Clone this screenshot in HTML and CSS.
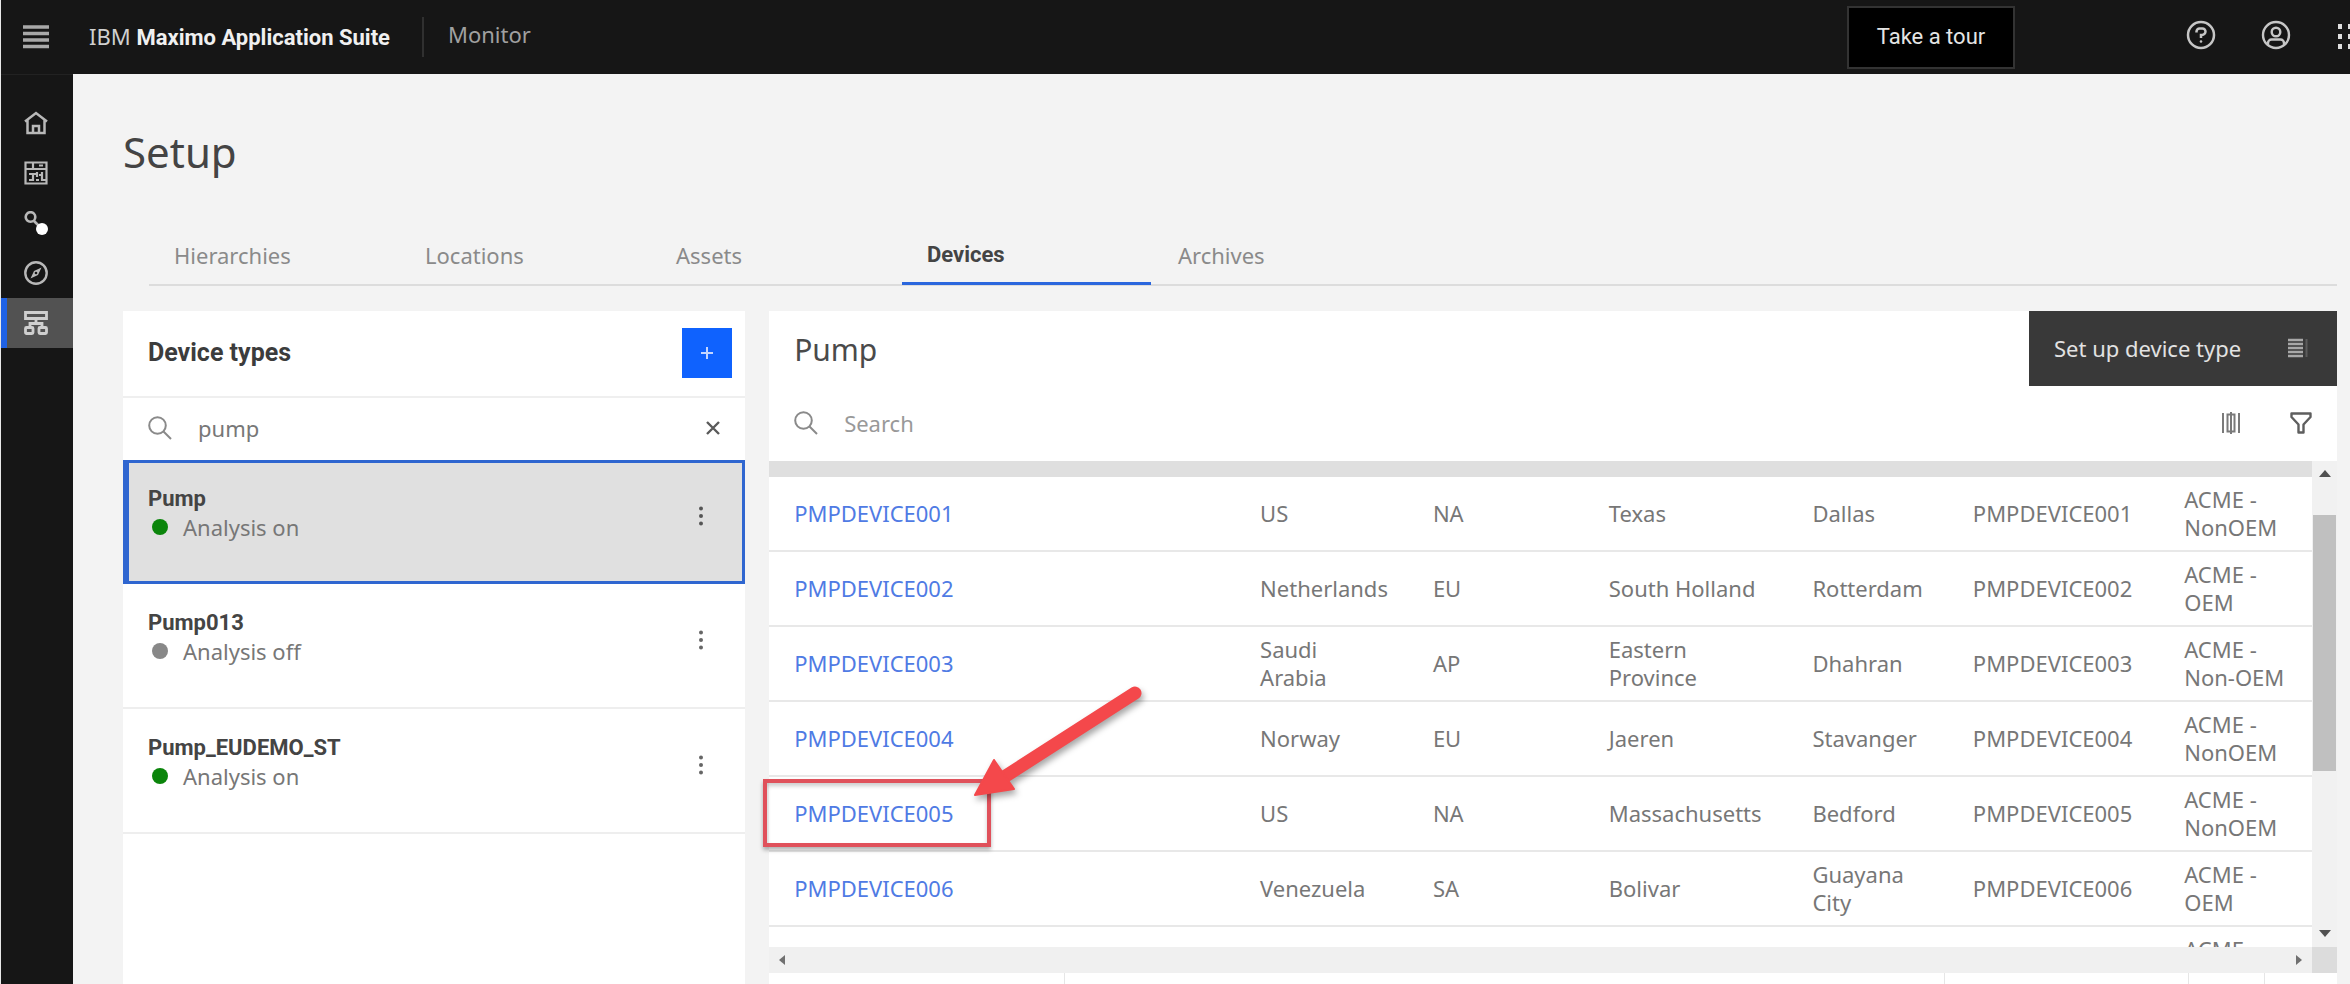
FILE: index.html
```
<!DOCTYPE html>
<html lang="en">
<head>
<meta charset="utf-8">
<title>Setup - Monitor</title>
<link rel="stylesheet" href="styles.css">
</head>
<body>
<header class="topbar">
  <button class="icon-btn menu-btn" aria-label="Menu">
    <svg width="26" height="26" viewBox="0 0 26 26" stroke="#a8a8a8" stroke-width="3.500"><path d="M0 3h26M0 9.500h26M0 16h26M0 22.500h26"/></svg>
  </button>
  <a class="brand" href="#">IBM <strong>Maximo Application Suite</strong></a>
  <span class="app-name">Monitor</span>
  <button class="tour">Take a tour</button>
  <div class="top-actions">
    <button class="icon-btn" aria-label="Help">
      <svg width="30" height="30" viewBox="0 0 30 30" fill="none" stroke="#c6c6c6" stroke-width="2.500"><circle cx="15" cy="15" r="13"/><path d="M10.500 12.500v-1a3 3 0 0 1 3-3h3a3 3 0 0 1 3 3 3.500 3.500 0 0 1-3.500 3.500h-1v3"/><circle cx="15" cy="21.500" r="1.300" fill="#c6c6c6" stroke="none"/></svg>
    </button>
    <button class="icon-btn" aria-label="User">
      <svg width="30" height="30" viewBox="0 0 30 30" fill="none" stroke="#c6c6c6" stroke-width="2.400"><circle cx="15" cy="15" r="13"/><circle cx="15" cy="12" r="4.300"/><path d="M7 25v-2a3.500 3.500 0 0 1 3.500-3.500h9a3.500 3.500 0 0 1 3.500 3.500v2"/></svg>
    </button>
    <button class="icon-btn apps" aria-label="Apps">
      <svg width="26" height="26" viewBox="0 0 26 26" fill="#dedede"><path d="M0 0h4v5H0zM10 0h4v5h-4zM20 0h4v5h-4zM0 10h4v5H0zM10 10h4v5h-4zM20 10h4v5h-4zM0 20h4v5H0zM10 20h4v5h-4zM20 20h4v5h-4z"/></svg>
    </button>
  </div>
</header>
<div class="shell">
  <nav class="rail" aria-label="Main">
    <a href="#" aria-label="Home"><svg width="24" height="24" viewBox="0 0 24 24" fill="none" stroke="#b8b8b8" stroke-width="2.500"><path d="M1 10.500 12 2l11 8.500M3.500 9v13h17V9M9 22v-7h6v7"/></svg></a>
    <a href="#" aria-label="Dashboards"><svg width="24" height="24" viewBox="0 0 24 24" fill="none" stroke="#b8b8b8" stroke-width="2.200"><path d="M1.500 1.500h21v21h-21zM1.500 8h21M9 1.500V8M15 4.500h4M5 13h4v6H5M13 11v5M12 19h3M18 11v8h4M9 13h3M15 14h3"/></svg></a>
    <a href="#" aria-label="Connect"><svg width="24" height="24" viewBox="0 0 24 24" fill="none" stroke="#b8b8b8" stroke-width="2.600"><circle cx="6.500" cy="6" r="4.800"/><path d="m10 10 5 5"/><circle cx="18" cy="18" r="6" fill="#fff" stroke="none"/></svg></a>
    <a href="#" aria-label="Explore"><svg width="24" height="24" viewBox="0 0 24 24" fill="none" stroke="#b8b8b8" stroke-width="2.400"><circle cx="12" cy="12" r="10.700"/><path d="m17.500 6.500-7.500 3.500-3.500 7.500 7.500-3.500z" fill="#b8b8b8" stroke="none"/><circle cx="12" cy="12" r="1.300" fill="#161616" stroke="none"/></svg></a>
    <a href="#" class="active" aria-current="page" aria-label="Setup"><svg width="24" height="24" viewBox="0 0 24 24" fill="none" stroke="#cfcfcf" stroke-width="2.800"><path d="M1.500 1.500h21v6h-21zM12 7.500v5M6 16.500v-4h12v4"/><rect x="1.500" y="16.500" width="7.500" height="6" rx="1"/><rect x="15" y="16.500" width="7.500" height="6" rx="1"/></svg></a>
  </nav>
  <main class="main">
    <h1>Setup</h1>
    <div class="tabs" role="tablist">
      <button role="tab">Hierarchies</button>
      <button role="tab">Locations</button>
      <button role="tab">Assets</button>
      <button role="tab" aria-selected="true" class="selected">Devices</button>
      <button role="tab">Archives</button>
    </div>
    <div class="panels">
      <section class="types">
        <div class="types-head">
          <h2>Device types</h2>
          <button class="add" aria-label="Add device type"><svg width="12" height="12" viewBox="0 0 12 12" stroke="#c4d6ff" stroke-width="2"><path d="M6 0v12M0 6h12"/></svg></button>
        </div>
        <div class="search types-search">
          <svg width="24" height="24" viewBox="0 0 24 24" fill="none" stroke="#8a8a8a" stroke-width="2"><circle cx="9.500" cy="9.500" r="8.300"/><path d="m15.500 15.500 7.500 7.500"/></svg>
          <input type="text" value="pump" aria-label="Search device types">
          <button class="icon-btn" aria-label="Clear"><svg width="14" height="14" viewBox="0 0 14 14" stroke="#5a5a5a" stroke-width="2.400"><path d="m1 1 12 12M13 1 1 13"/></svg></button>
        </div>
        <ul class="type-list">
          <li class="current"><div><strong>Pump</strong><span class="status on">Analysis on</span></div><button class="icon-btn" aria-label="Pump options"><svg width="6" height="20" viewBox="0 0 6 20" fill="#555"><circle cx="3" cy="2.500" r="2"/><circle cx="3" cy="10" r="2"/><circle cx="3" cy="17.500" r="2"/></svg></button></li>
          <li><div><strong>Pump013</strong><span class="status">Analysis off</span></div><button class="icon-btn" aria-label="Pump013 options"><svg width="6" height="20" viewBox="0 0 6 20" fill="#666"><circle cx="3" cy="2.500" r="2"/><circle cx="3" cy="10" r="2"/><circle cx="3" cy="17.500" r="2"/></svg></button></li>
          <li><div><strong>Pump_EUDEMO_ST</strong><span class="status on">Analysis on</span></div><button class="icon-btn" aria-label="Pump_EUDEMO_ST options"><svg width="6" height="20" viewBox="0 0 6 20" fill="#666"><circle cx="3" cy="2.500" r="2"/><circle cx="3" cy="10" r="2"/><circle cx="3" cy="17.500" r="2"/></svg></button></li>
        </ul>
      </section>
      <section class="devices">
        <div class="devices-head">
          <h2>Pump</h2>
          <button class="setup-btn">Set up device type
            <svg width="20" height="20" viewBox="0 0 20 20" stroke="#a8a8a8" stroke-width="2.400"><path d="M0 2h15M0 6h15M0 10h15M0 14h15M0 18h15"/><path d="M18.500 1v18" stroke="#5c5c5c" stroke-width="2"/></svg>
          </button>
        </div>
        <div class="search devices-search">
          <svg width="24" height="24" viewBox="0 0 24 24" fill="none" stroke="#8a8a8a" stroke-width="2"><circle cx="9.500" cy="9.500" r="8.300"/><path d="m15.500 15.500 7.500 7.500"/></svg>
          <input type="text" placeholder="Search" aria-label="Search devices">
          <button class="icon-btn" aria-label="Columns"><svg width="18" height="22" viewBox="0 0 18 22" fill="none" stroke="#7a7a7a" stroke-width="2"><path d="M1 1v20M17 1v20M5.500 2.500h7v17h-7zM9 0v22"/></svg></button>
          <button class="icon-btn" aria-label="Filter"><svg width="22" height="22" viewBox="0 0 22 22" fill="none" stroke="#5e5e5e" stroke-width="2.400" stroke-linejoin="round"><path d="M1.500 1.500h19v3.500L13.500 12.500v8h-5v-8L1.500 5z"/></svg></button>
        </div>
        <div class="grid">
          <div class="viewport">
            <table>
              <colgroup><col class="c1"><col class="c2"><col class="c3"><col class="c4"><col class="c5"><col class="c6"><col class="c7"></colgroup>
              <thead><tr><td colspan="7"></td></tr></thead>
              <tbody>
                <tr><td><a href="#">PMPDEVICE001</a></td><td>US</td><td>NA</td><td>Texas</td><td>Dallas</td><td>PMPDEVICE001</td><td>ACME -<br>NonOEM</td></tr>
                <tr><td><a href="#">PMPDEVICE002</a></td><td>Netherlands</td><td>EU</td><td>South Holland</td><td>Rotterdam</td><td>PMPDEVICE002</td><td>ACME -<br>OEM</td></tr>
                <tr><td><a href="#">PMPDEVICE003</a></td><td>Saudi<br>Arabia</td><td>AP</td><td>Eastern<br>Province</td><td>Dhahran</td><td>PMPDEVICE003</td><td>ACME -<br>Non-OEM</td></tr>
                <tr><td><a href="#">PMPDEVICE004</a></td><td>Norway</td><td>EU</td><td>Jaeren</td><td>Stavanger</td><td>PMPDEVICE004</td><td>ACME -<br>NonOEM</td></tr>
                <tr><td><div class="marked"><a href="#">PMPDEVICE005</a><span class="mark-box"></span>
                  <svg class="mark-arrow" width="190" height="130" viewBox="0 0 190 130"><path d="M34 103 168 17" stroke="#f4484b" stroke-width="13" stroke-linecap="round"/><path d="M8 119 27 84 47 113z" fill="#f4484b" stroke="#f4484b" stroke-width="2" stroke-linejoin="round"/></svg></div></td><td>US</td><td>NA</td><td>Massachusetts</td><td>Bedford</td><td>PMPDEVICE005</td><td>ACME -<br>NonOEM</td></tr>
                <tr><td><a href="#">PMPDEVICE006</a></td><td>Venezuela</td><td>SA</td><td>Bolivar</td><td>Guayana<br>City</td><td>PMPDEVICE006</td><td>ACME -<br>OEM</td></tr>
                <tr><td></td><td></td><td></td><td></td><td></td><td></td><td>ACME<br>&nbsp;</td></tr>
              </tbody>
            </table>
          </div>
          <div class="vbar">
            <svg width="12" height="8" viewBox="0 0 12 8" fill="#505050"><path d="M0 7 6 0l6 7z"/></svg>
            <div class="thumb"></div>
            <svg width="12" height="8" viewBox="0 0 12 8" fill="#505050"><path d="M0 1 6 8l6-7z"/></svg>
          </div>
          <div class="hbar">
            <svg width="6" height="10" viewBox="0 0 6 10" fill="#707070"><path d="M6 0 0 5l6 5z"/></svg>
            <svg width="6" height="10" viewBox="0 0 6 10" fill="#707070"><path d="m0 0 6 5-6 5z"/></svg>
          </div>
          <div class="corner"></div>
        </div>
        <div class="pager"><span></span><span></span><span></span><span></span><span></span></div>
      </section>
    </div>
  </main>
</div>
</body>
</html>
```
FILE: styles.css
```
* { box-sizing: border-box; }
body {
  margin: 0;
  height: 100vh;
  overflow: hidden;
  display: flex;
  flex-direction: column;
  border-left: 1px solid #e8e8e8;
  background: #f3f3f3;
  color: #777;
  font: 22px/28px "Noto Sans", sans-serif;
}
h1, h2, ul { margin: 0; padding: 0; font-weight: 400; }
a { color: inherit; text-decoration: none; }
button, input { font: inherit; color: inherit; border: 0; padding: 0; background: none; }
svg { display: block; flex: none; }
strong { font-family: Roboto, sans-serif; font-weight: 700; }

.topbar {
  flex: none;
  height: 74px;
  display: flex;
  align-items: center;
  background: #161616;
  color: #e0e0e0;
}
.menu-btn { width: 70px; display: flex; justify-content: center; }
.brand { margin-left: 18px; color: #d0d0d0; }
.brand strong { color: #f0f0f0; }
.app-name {
  margin-left: 32px;
  padding-left: 24px;
  height: 40px;
  line-height: 34px;
  border-left: 2px solid #303030;
  color: #a0a0a0;
}
.tour {
  margin-left: auto;
  width: 168px;
  height: 63px;
  border: 2px solid #333;
  background: #000;
  color: #e4e4e4;
  font-family: Roboto, sans-serif;
}
.top-actions { display: flex; align-items: center; gap: 45px; margin-left: 171px; padding-bottom: 4px; width: 164px; overflow: hidden; }
.apps { margin: 4px 0 0 2px; }

.shell { flex: 1; min-height: 0; display: flex; }
.rail { flex: none; width: 72px; padding-top: 23px; background: #161616; border-top: 1px solid #222; }
.rail a { height: 50px; display: flex; align-items: center; justify-content: center; padding-right: 2px; }
.rail a.active { background: #525252; border-left: 6px solid #1f62e6; padding-right: 8px; }

.main { flex: 1; min-width: 0; display: flex; flex-direction: column; padding: 48px 13px 0 50px; }
h1 { font-size: 42px; line-height: 60px; color: #444; }
.tabs {
  margin: 46px 0 0 26px;
  height: 58px;
  display: flex;
  gap: 2px;
  border-bottom: 2px solid #dcdcdc;
}
.tabs button { flex: 0 0 249px; height: 57px; padding: 0 0 4px 25px; text-align: left; color: #8a8a8a; }
.tabs .selected { font-family: Roboto, sans-serif; font-weight: 700; color: #444; border-bottom: 3px solid #2a66dd; padding-bottom: 0; }

.panels { flex: 1; min-height: 0; margin-top: 25px; display: flex; gap: 24px; }
.types { flex: 0 0 28.100%; background: #fff; }
.types-head {
  height: 87px;
  padding: 0 13px 2px 25px;
  display: flex;
  align-items: center;
  justify-content: space-between;
  border-bottom: 2px solid #efefef;
}
.types-head h2 { font: 700 25px/28px Roboto, sans-serif; color: #3c3c3c; }
.add { width: 50px; height: 50px; background: #0f62fe; display: flex; align-items: center; justify-content: center; }
.search { display: flex; align-items: center; padding: 0 25px 2px; }
.search input { flex: 1; min-width: 0; margin-left: 26px; outline: 0; }
.search input::placeholder { color: #999; opacity: 1; }
.types-search { height: 62px; }
.type-list { list-style: none; }
.type-list li {
  height: 125px;
  padding: 25px 41px 0 25px;
  display: flex;
  justify-content: space-between;
  border-bottom: 2px solid #eee;
}
.type-list li.current { height: 124px; border: 3px solid #2f66d0; border-left-width: 6px; background: #e0e0e0; padding: 22px 38px 0 19px; }
.type-list strong { display: block; color: #444; }
.type-list .icon-btn { align-self: flex-start; margin-top: 21px; }
.status { display: flex; align-items: center; gap: 15px; padding-left: 4px; }
.status::before { content: ""; width: 16px; height: 16px; border-radius: 50%; background: #888; }
.status.on::before { background: #0b850b; }

.devices { flex: 1; min-width: 0; display: flex; flex-direction: column; background: #fff; }
.devices-head { display: flex; justify-content: space-between; height: 75px; padding-left: 25px; }
.devices-head h2 { font-size: 30px; line-height: 78px; color: #4a4a4a; }
.setup-btn {
  width: 308px;
  padding: 0 29px 2px 25px;
  display: flex;
  align-items: center;
  justify-content: space-between;
  background: #393939;
  color: #e2e2e2;
}
.devices-search { height: 75px; }
.devices-search .icon-btn { margin-left: 50px; }
.grid {
  flex: 1;
  min-height: 0;
  display: grid;
  grid-template: minmax(0, 1fr) 26px / minmax(0, 1fr) 25px;
}
/* The extra room on the left lets the callout reach past the panel edge */
.viewport { overflow: hidden; margin-left: -16px; padding-left: 16px; }
table { width: 100%; table-layout: fixed; border-collapse: separate; border-spacing: 0; }
.c1 { width: 30.200%; }
.c2 { width: 11.200%; }
.c3 { width: 11.400%; }
.c4 { width: 13.200%; }
.c5 { width: 10.400%; }
.c6 { width: 13.700%; }
.c7 { width: 9.900%; }
thead td { height: 16px; background: #dfdfdf; padding: 0; }
tbody td { height: 75px; padding: 0 0 1px 25px; border-bottom: 2px solid #e8e8e8; white-space: nowrap; }
tbody a { color: #4f7be4; }
.vbar { display: flex; flex-direction: column; align-items: center; padding: 9px 1px 10px; background: #f1f1f1; }
.thumb { width: 100%; height: 256px; margin: 37px 0 auto; background: #c0c0c0; }
.hbar { display: flex; justify-content: space-between; align-items: center; padding: 0 10px; background: #f0f0f0; }
.corner { background: #dcdcdc; }
.pager { flex: none; height: 11px; display: grid; grid-template-columns: 295fr 879fr 244fr 76fr 73fr; }
.pager span + span { border-left: 1px solid #e6e6e6; }

/* Callout around the device that is opened next */
.marked { position: relative; }
.mark-box {
  position: absolute;
  left: -31px;
  top: -20px;
  width: 228px;
  height: 68px;
  border: 4px solid #e0515b;
  box-shadow: 0 3px 4px rgba(0, 0, 0, .3), inset 0 3px 4px rgba(0, 0, 0, .2);
  pointer-events: none;
}
.mark-arrow { position: absolute; left: 173px; top: -123px; filter: drop-shadow(2px 4px 3px rgba(0, 0, 0, .35)); pointer-events: none; }
```
